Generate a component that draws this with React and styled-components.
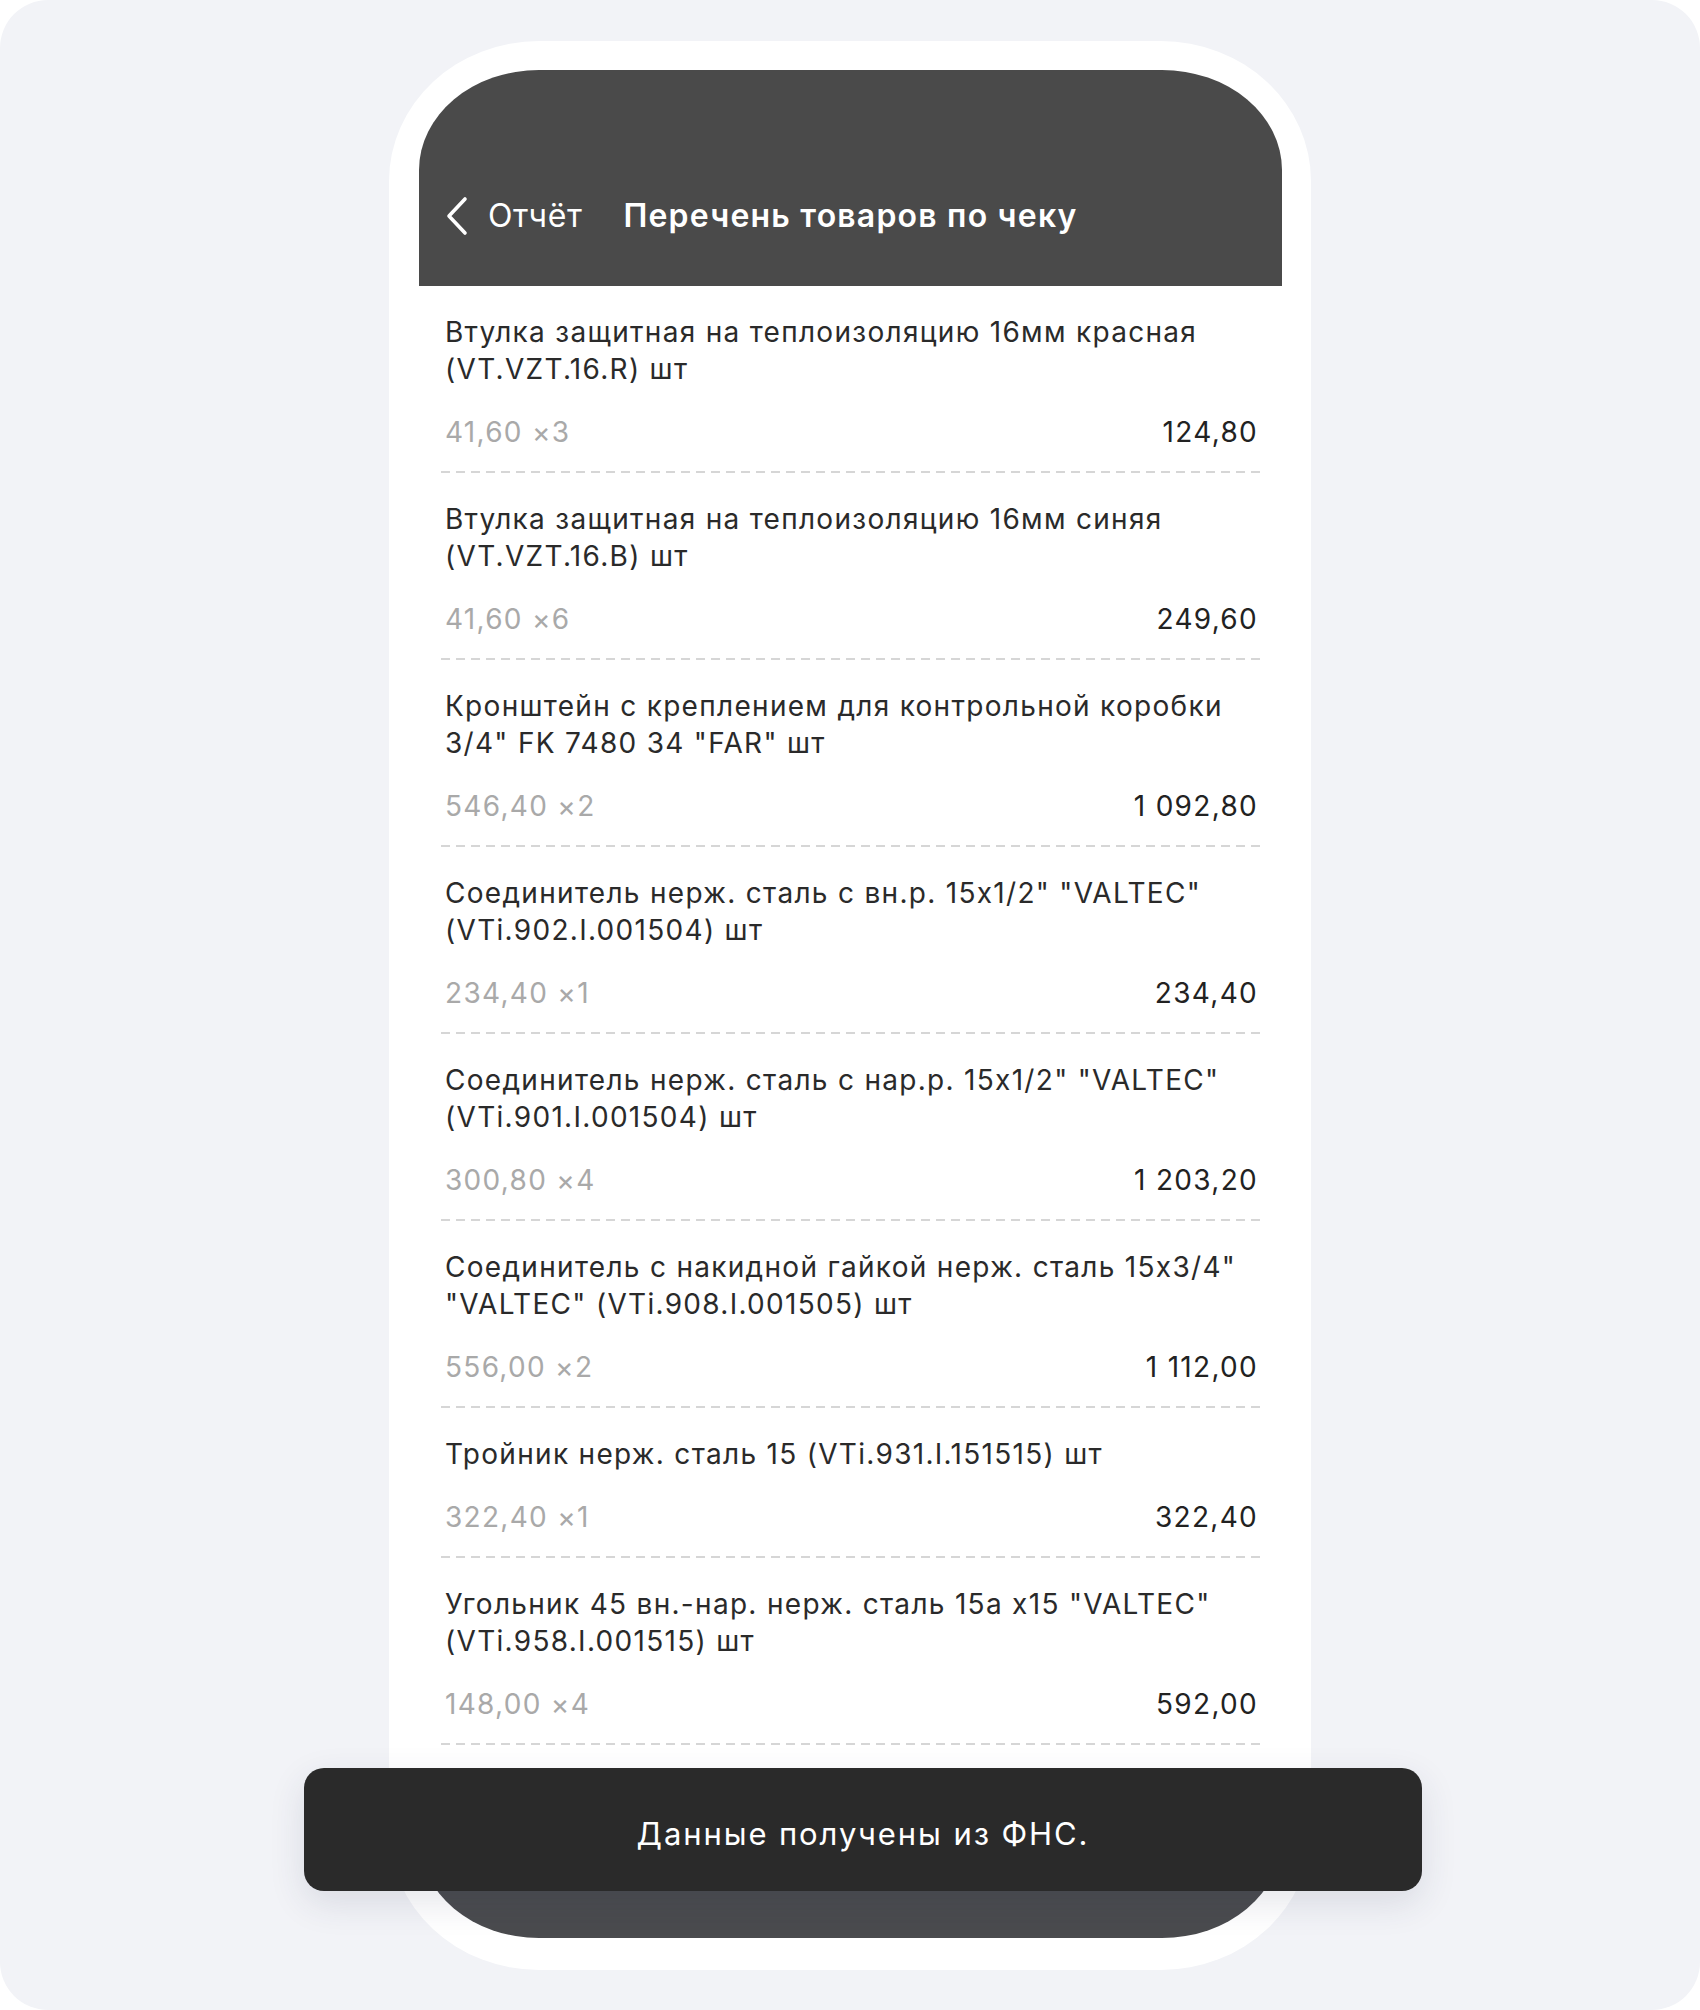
import React from "react";
import styled, { createGlobalStyle } from "styled-components";

const items = [
  { name: "Втулка защитная на теплоизоляцию 16мм красная (VT.VZT.16.R) шт", qty: "41,60 ×3", sum: "124,80" },
  { name: "Втулка защитная на теплоизоляцию 16мм синяя (VT.VZT.16.B) шт", qty: "41,60 ×6", sum: "249,60" },
  { name: "Кронштейн с креплением для контрольной коробки 3/4\" FK 7480 34 \"FAR\" шт", qty: "546,40 ×2", sum: "1 092,80" },
  { name: "Соединитель нерж. сталь с вн.р. 15x1/2\" \"VALTEC\" (VTi.902.I.001504) шт", qty: "234,40 ×1", sum: "234,40" },
  { name: "Соединитель нерж. сталь с нар.р. 15x1/2\" \"VALTEC\" (VTi.901.I.001504) шт", qty: "300,80 ×4", sum: "1 203,20" },
  { name: "Соединитель с накидной гайкой нерж. сталь 15x3/4\" \"VALTEC\" (VTi.908.I.001505) шт", qty: "556,00 ×2", sum: "1 112,00" },
  { name: "Тройник нерж. сталь 15 (VTi.931.I.151515) шт", qty: "322,40 ×1", sum: "322,40" },
  { name: "Угольник 45 вн.-нар. нерж. сталь 15а x15 \"VALTEC\" (VTi.958.I.001515) шт", qty: "148,00 ×4", sum: "592,00" },
];

const GlobalStyle = createGlobalStyle`
  body {
    margin: 0;
    background: #ffffff;
    font-family: Inter, "Noto Sans", sans-serif;
  }
`;

const App = () => {
  return (
    <>
      <GlobalStyle />
      <Page>
        <Phone>
          <Screen>
            <Header>
              <BackButton>
                <svg width="24" height="40" viewBox="0 0 24 40" fill="none">
                  <path d="M20 3 L4 20 L20 37" stroke="#fff" strokeWidth="3.6" strokeLinecap="round" strokeLinejoin="round" />
                </svg>
                <BackLabel>Отчёт</BackLabel>
              </BackButton>
              <Title>Перечень товаров по чеку</Title>
            </Header>
            <List>
              {items.map((it) => (
                <Item key={it.name}>
                  <Name>{it.name}</Name>
                  <Row>
                    <Qty>{it.qty}</Qty>
                    <Sum>{it.sum}</Sum>
                  </Row>
                  <Divider />
                </Item>
              ))}
            </List>
            <BottomBar />
          </Screen>
        </Phone>
        <Toast>Данные получены из ФНС.</Toast>
      </Page>
    </>
  );
};

const Page = styled.div`
  position: relative;
  width: 1700px;
  height: 2010px;
  box-sizing: border-box;
  padding-top: 41px;
  background: #f2f3f7;
  border-radius: 48px;
  display: flex;
  justify-content: center;
`;

const Phone = styled.div`
  width: 922px;
  height: 1929px;
  box-sizing: border-box;
  padding: 29px 29px 32px 30px;
  background: #ffffff;
  border-radius: 150px / 140px;
`;

const Screen = styled.div`
  height: 100%;
  display: flex;
  flex-direction: column;
  overflow: hidden;
  background: #ffffff;
  border-radius: 120px / 100px;
`;

const Header = styled.div`
  flex: none;
  height: 216px;
  box-sizing: border-box;
  padding: 0 0 50px 26px;
  display: flex;
  align-items: flex-end;
  gap: 41px;
  background: #4a4a4a;
  color: #ffffff;
`;

const BackButton = styled.div`
  display: flex;
  align-items: center;
  gap: 19px;
  height: 40px;
`;

const BackLabel = styled.span`
  font-size: 32px;
  line-height: 40px;
  font-weight: 400;
  letter-spacing: 0.6px;
`;

const Title = styled.span`
  font-size: 32px;
  line-height: 40px;
  font-weight: 600;
  letter-spacing: 1.2px;
`;

const List = styled.div`
  flex: 1;
  overflow: hidden;
  padding: 0 18px 0 22px;
`;

const Item = styled.div`
  padding-top: 28px;
  color: #2a2a2a;
  font-size: 28px;
  line-height: 37px;
  letter-spacing: 1.3px;
`;

const Name = styled.div`
  padding: 0 7px 0 4px;
`;

const Row = styled.div`
  margin-top: 26px;
  padding: 0 6px 0 4px;
  display: flex;
  justify-content: space-between;
`;

const Qty = styled.span`
  color: #a9a9a9;
`;

const Sum = styled.span`
  color: #222222;
`;

const Divider = styled.div`
  margin-top: 20px;
  height: 2px;
  background: repeating-linear-gradient(to right, #d6d6d6 0 9px, transparent 9px 15px);
`;

const BottomBar = styled.div`
  flex: none;
  height: 120px;
  background: #4a4b4e;
`;

const Toast = styled.div`
  position: absolute;
  left: 304px;
  top: 1768px;
  width: 1118px;
  height: 123px;
  box-sizing: border-box;
  padding-top: 8px;
  border-radius: 20px;
  background: #2a2a2a;
  box-shadow: 0 12px 36px rgba(40, 50, 80, 0.12);
  color: #ffffff;
  font-size: 31px;
  letter-spacing: 1.9px;
  display: flex;
  align-items: center;
  justify-content: center;
`;

export default App;
